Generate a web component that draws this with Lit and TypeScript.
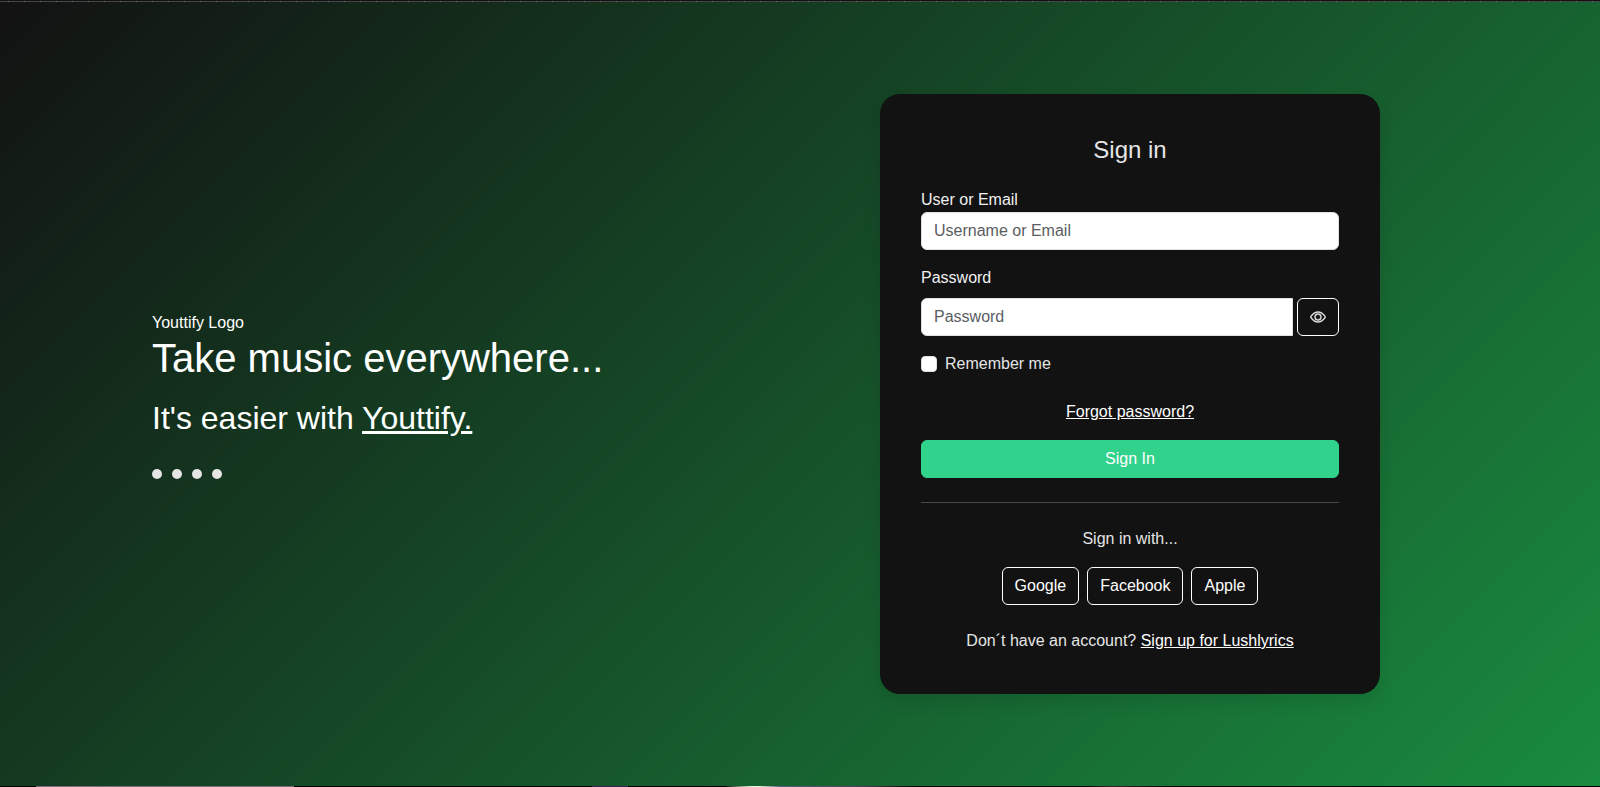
import { LitElement, html, css } from "lit";
import { customElement, state } from "lit/decorators.js";

const PROVIDERS = ["Google", "Facebook", "Apple"];

@customElement("intro-panel")
class IntroPanel extends LitElement {
  static styles = css`
    :host {
      display: block;
      color: #fff;
    }
    .logo {
      display: block;
    }
    h1,
    h2 {
      margin: 0;
      font-weight: 400;
    }
    h1 {
      font-size: 40px;
      line-height: 46px;
      margin-bottom: 18px;
    }
    h2 {
      font-size: 32px;
      line-height: 38px;
      margin-bottom: 32px;
    }
    .brand {
      text-decoration: underline;
    }
    .dots {
      display: flex;
      gap: 10px;
    }
    .dot {
      width: 10px;
      height: 10px;
      border-radius: 50%;
      background: #e5e5e5;
    }
  `;

  render() {
    return html`
      <span class="logo">Youttify Logo</span>
      <h1>Take music everywhere...</h1>
      <h2>It's easier with <span class="brand">Youttify.</span></h2>
      <div class="dots">
        ${[0, 1, 2, 3].map(() => html`<span class="dot"></span>`)}
      </div>
    `;
  }
}

@customElement("sign-in-card")
class SignInCard extends LitElement {
  @state() private passwordShown = false;

  static styles = css`
    * {
      box-sizing: border-box;
    }
    :host {
      display: block;
      box-sizing: border-box;
      width: 100%;
      max-width: 500px;
      padding: 41px;
      border-radius: 20px;
      background: #121212;
      color: #e5e5e5;
      box-shadow: 0 8px 16px rgba(0, 0, 0, 0.1);
    }
    form {
      display: flex;
      flex-direction: column;
    }
    h4 {
      margin: 0 0 24px;
      font-size: 24px;
      line-height: 29px;
      font-weight: 400;
      text-align: center;
    }
    .field {
      display: flex;
      flex-direction: column;
      margin-bottom: 16px;
    }
    .spaced {
      gap: 8px;
    }
    .label {
      color: #f0f0f0;
    }
    .input {
      width: 100%;
      min-width: 0;
      height: 38px;
      padding: 6px 12px;
      border: 1px solid #dee2e6;
      border-radius: 6px;
      background: #fff;
      color: #212529;
      font: inherit;
    }
    .input::placeholder {
      color: #5a5d61;
      opacity: 1;
    }
    .group {
      display: flex;
      gap: 4px;
    }
    .group .input {
      border-radius: 6px 0 0 6px;
    }
    .btn {
      height: 38px;
      padding: 6px 12px;
      border: 1px solid #fff;
      border-radius: 6px;
      background: transparent;
      color: #fff;
      font: inherit;
      cursor: pointer;
    }
    .eye {
      display: block;
      width: 16px;
      height: 16px;
      fill: #f0f0f0;
      stroke: #f0f0f0;
      stroke-width: 0.4;
    }
    .primary {
      border-color: #31d28c;
      background: #31d28c;
    }
    .check {
      display: flex;
      align-items: center;
      gap: 8px;
      margin-bottom: 24px;
    }
    .box {
      appearance: none;
      width: 16px;
      height: 16px;
      margin: 0;
      border: 1px solid #dee2e6;
      border-radius: 4px;
      background: #fff;
    }
    .box:checked {
      background: #31d28c;
    }
    a {
      color: #fff;
    }
    .forgot {
      align-self: center;
      margin-bottom: 16px;
    }
    hr {
      width: 100%;
      margin: 24px 0;
      border: 0;
      border-top: 1px solid #474747;
    }
    .with {
      text-align: center;
      margin-bottom: 16px;
    }
    .providers {
      display: flex;
      justify-content: center;
      gap: 8px;
      margin-bottom: 24px;
    }
    .signup {
      text-align: center;
    }
  `;

  render() {
    return html`
      <form @submit=${(e: Event) => e.preventDefault()}>
        <h4>Sign in</h4>
        <div class="field">
          <label class="label" for="user">User or Email</label>
          <input class="input" id="user" type="text" placeholder="Username or Email" />
        </div>
        <div class="field spaced">
          <label class="label" for="password">Password</label>
          <div class="group">
            <input
              class="input"
              id="password"
              type=${this.passwordShown ? "text" : "password"}
              placeholder="Password"
            />
            <button
              class="btn"
              type="button"
              aria-label="Show password"
              @click=${() => (this.passwordShown = !this.passwordShown)}
            >
              <svg class="eye" viewBox="0 0 16 16" aria-hidden="true">
                <path
                  d="M16 8s-3-5.500-8-5.500S0 8 0 8s3 5.500 8 5.500S16 8 16 8M1.173 8a13.130 13.130 0 0 1 1.660-2.043C4.120 4.668 5.880 3.500 8 3.500s3.879 1.168 5.168 2.457A13.130 13.130 0 0 1 14.828 8q-.086.130-.195.288c-.335.480-.830 1.120-1.465 1.755C11.879 11.332 10.119 12.500 8 12.500s-3.879-1.168-5.168-2.457A13.130 13.130 0 0 1 1.172 8z"
                />
                <path
                  d="M8 5.500a2.500 2.500 0 1 0 0 5 2.500 2.500 0 0 0 0-5M4.500 8a3.500 3.500 0 1 1 7 0 3.500 3.500 0 0 1-7 0"
                />
              </svg>
            </button>
          </div>
        </div>
        <div class="check">
          <input class="box" id="remember" type="checkbox" />
          <label for="remember">Remember me</label>
        </div>
        <a class="forgot" href="#">Forgot password?</a>
        <button class="btn primary" type="submit">Sign In</button>
        <hr />
        <div class="with">Sign in with...</div>
        <div class="providers">
          ${PROVIDERS.map((name) => html`<button class="btn" type="button">${name}</button>`)}
        </div>
        <div class="signup">Don´t have an account? <a href="#">Sign up for Lushlyrics</a></div>
      </form>
    `;
  }
}

@customElement("app-root")
class AppRoot extends LitElement {
  static styles = css`
    :host {
      display: flex;
      flex-direction: column;
      min-height: 100vh;
      background: #000;
      font: 16px/24px "Liberation Sans", Arial, sans-serif;
    }
    .top-edge {
      height: 2px;
      box-sizing: border-box;
      border-top: 1px solid #111;
      background: repeating-linear-gradient(90deg, #454545 0 8px, #777 8px 9px, #454545 9px 16px);
    }
    main {
      flex: 1;
      display: flex;
      align-items: center;
      background: linear-gradient(135deg, #121212, #198b3f);
    }
    .container {
      flex: 1;
      max-width: 1320px;
      margin: 0 auto;
      display: grid;
      grid-template-columns: 1fr 1fr;
      align-items: center;
    }
    .intro {
      padding: 2px 12px 0;
    }
    .card {
      display: flex;
      justify-content: center;
      padding: 0 12px;
    }
    .bottom-edge {
      height: 1px;
      background: linear-gradient(
        90deg,
        #000 36px,
        #776d7c 36px 294px,
        #000 294px 592px,
        #3a1e58 592px 628px,
        #000 628px 725px,
        #dcf5dc 750px 760px,
        #50637f 780px,
        #553b55 860px,
        #000 920px 1080px,
        #3d1f2c 1110px,
        #000 1180px
      );
    }
  `;

  render() {
    return html`
      <div class="top-edge"></div>
      <main>
        <div class="container">
          <div class="intro"><intro-panel></intro-panel></div>
          <div class="card"><sign-in-card></sign-in-card></div>
        </div>
      </main>
      <div class="bottom-edge"></div>
    `;
  }
}
